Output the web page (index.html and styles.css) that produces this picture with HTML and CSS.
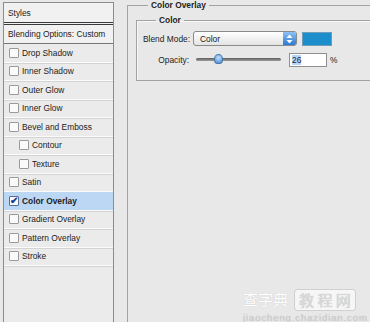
FILE: index.html
```html
<!DOCTYPE html>
<html lang="en">
<head>
  <meta charset="UTF-8">
  <title>Layer Style - Color Overlay</title>
  <link rel="stylesheet" href="styles.css">
</head>
<body>
  <aside class="styles-list">
    <div class="row head">Styles</div>
    <div class="row head blend">Blending Options: Custom</div>
    <label class="row"><span class="box"></span>Drop Shadow</label>
    <label class="row"><span class="box"></span>Inner Shadow</label>
    <label class="row"><span class="box"></span>Outer Glow</label>
    <label class="row"><span class="box"></span>Inner Glow</label>
    <label class="row"><span class="box"></span>Bevel and Emboss</label>
    <label class="row sub"><span class="box"></span>Contour</label>
    <label class="row sub"><span class="box"></span>Texture</label>
    <label class="row"><span class="box"></span>Satin</label>
    <label class="row active"><span class="box checked">&#10004;</span>Color Overlay</label>
    <label class="row"><span class="box"></span>Gradient Overlay</label>
    <label class="row"><span class="box"></span>Pattern Overlay</label>
    <label class="row"><span class="box"></span>Stroke</label>
  </aside>

  <main class="panel">
    <fieldset class="group outer">
      <legend>Color Overlay</legend>
      <fieldset class="group inner">
        <legend>Color</legend>
        <div class="field">
          <span class="lbl">Blend Mode:</span>
          <div class="select">
            <span>Color</span>
            <span class="stepper">
              <svg width="7" height="10" viewBox="0 0 7 10"><path d="M3.5 0.5 L6.5 4 L0.5 4 Z M3.5 9.5 L6.5 6 L0.5 6 Z" fill="#fff"/></svg>
            </span>
          </div>
          <span class="swatch"></span>
        </div>
        <div class="field">
          <span class="lbl opacity">Opacity:</span>
          <div class="slider"><span class="thumb"></span></div>
          <span class="num"><span class="sel">26</span></span>
          <span class="pct">%</span>
        </div>
      </fieldset>
    </fieldset>
  </main>

  <div class="watermark">
    <div class="wm-big">查字典<span class="wm-box">教 程 网</span></div>
    <div class="wm-small">jiaocheng.chazidian.com</div>
  </div>
</body>
</html>
```

FILE: styles.css
```css
body {
  margin: 0;
  width: 370px;
  height: 322px;
  overflow: hidden;
  background-color: #e8e8e8;
  font-family: 'Liberation Sans', Arial, sans-serif;
  font-size: 8.4px;
  color: #222;
  display: flex;
  position: relative;
  white-space: nowrap;
}
.styles-list {
  margin: 2px 0 0 3px;
  width: 109px;
  border: 1px solid #8c8c8c;
  border-bottom: none;
  background-color: #ebebeb;
  display: flex;
  flex-direction: column;
}
.row {
  display: flex;
  align-items: center;
  height: 17.5px;
  padding-left: 5px;
  border-bottom: 1px solid #fbfbfb;
  box-shadow: 0 1px 0 #d4d4d4;
}
.row.head {
  height: 19px;
  padding-left: 4px;
  border-bottom: 3px double #3a3a3a;
  box-shadow: none;
  background-color: #f1f1f1;
}
.row.blend {
  height: 18px;
  border-bottom: 1px solid #777;
}
.row.sub {
  padding-left: 15px;
}
.row.active {
  background-color: #bcd7f4;
  font-weight: bold;
}
.box {
  width: 8px;
  height: 8px;
  border: 1px solid #9a9a9a;
  border-radius: 1px;
  background-color: #fafafa;
  margin-right: 3px;
  display: flex;
  align-items: center;
  justify-content: center;
  font-size: 10px;
  line-height: 1;
}
.box.checked {
  color: #1c3f8f;
  border-color: #5a6c9a;
}
.panel {
  margin-left: 13px;
  flex: 1;
  display: flex;
}
.group {
  margin: 0;
  border: 1px solid #a3a3a3;
  border-right: none;
  padding: 0;
  min-width: 0;
}
.group legend {
  font-weight: bold;
  padding: 0 3px;
  margin-left: 12px;
  line-height: 10px;
}
.outer {
  flex: 1;
  border-bottom: none;
  padding: 5px 0 0 8px;
}
.inner {
  height: 60px;
  padding: 4px 0 0 6px;
  box-shadow: inset 1px 1px 0 #f7f7f7;
}
.inner legend {
  margin-left: 13px;
}
.field {
  display: flex;
  align-items: center;
  height: 15px;
  margin-top: 2px;
}
.field + .field {
  margin-top: 6px;
}
.lbl {
  width: 46px;
  text-align: right;
  margin-right: 4px;
}
.select {
  width: 96px;
  height: 13px;
  border: 1px solid #8a8a8a;
  border-radius: 3px;
  background: linear-gradient(#ffffff, #e4e4e4);
  display: flex;
  align-items: center;
  justify-content: space-between;
  padding-left: 6px;
  box-sizing: content-box;
  overflow: hidden;
}
.stepper {
  width: 13px;
  height: 13px;
  background: linear-gradient(#8cc0f2, #2b79d3);
  display: flex;
  align-items: center;
  justify-content: center;
}
.swatch {
  width: 28px;
  height: 12px;
  margin-left: 5px;
  background-color: #1b8ecb;
  border: 1px solid #6d9db8;
}
.slider {
  width: 85px;
  height: 3px;
  margin: 0 8px 0 3px;
  border-radius: 2px;
  background: linear-gradient(#5e5e5e, #9c9c9c);
  position: relative;
}
.thumb {
  position: absolute;
  left: 18px;
  top: -4px;
  width: 9px;
  height: 10px;
  border-radius: 50% 50% 40% 40%;
  background: radial-gradient(circle at 50% 35%, #c6e2fb, #3e86d0);
  border: 1px solid #4a77aa;
  box-sizing: border-box;
}
.num {
  width: 34px;
  height: 12px;
  border: 1px solid #8f8f8f;
  background-color: #fff;
  display: flex;
  align-items: center;
  padding-left: 2px;
}
.sel {
  background-color: #b5d5fb;
  line-height: 10px;
}
.pct {
  margin-left: 3px;
}
.watermark {
  position: absolute;
  left: 243px;
  top: 289px;
  color: #ffffff;
  text-shadow: 0 0 1px #bdbdbd;
  font-family: 'Noto Sans CJK SC', sans-serif;
}
.wm-big {
  font-size: 15px;
  line-height: 20px;
  display: flex;
  gap: 6px;
}
.wm-box {
  border: 1px solid #d0d0d0;
  border-radius: 3px;
  padding: 0 4px;
  color: #d8d8d8;
  background-color: #f6f6f6;
}
.wm-small {
  font-family: 'Liberation Sans', Arial, sans-serif;
  font-size: 9.5px;
  line-height: 9px;
  letter-spacing: 0.9px;
  margin-top: 2px;
  color: #d0d0d0;
}
```
